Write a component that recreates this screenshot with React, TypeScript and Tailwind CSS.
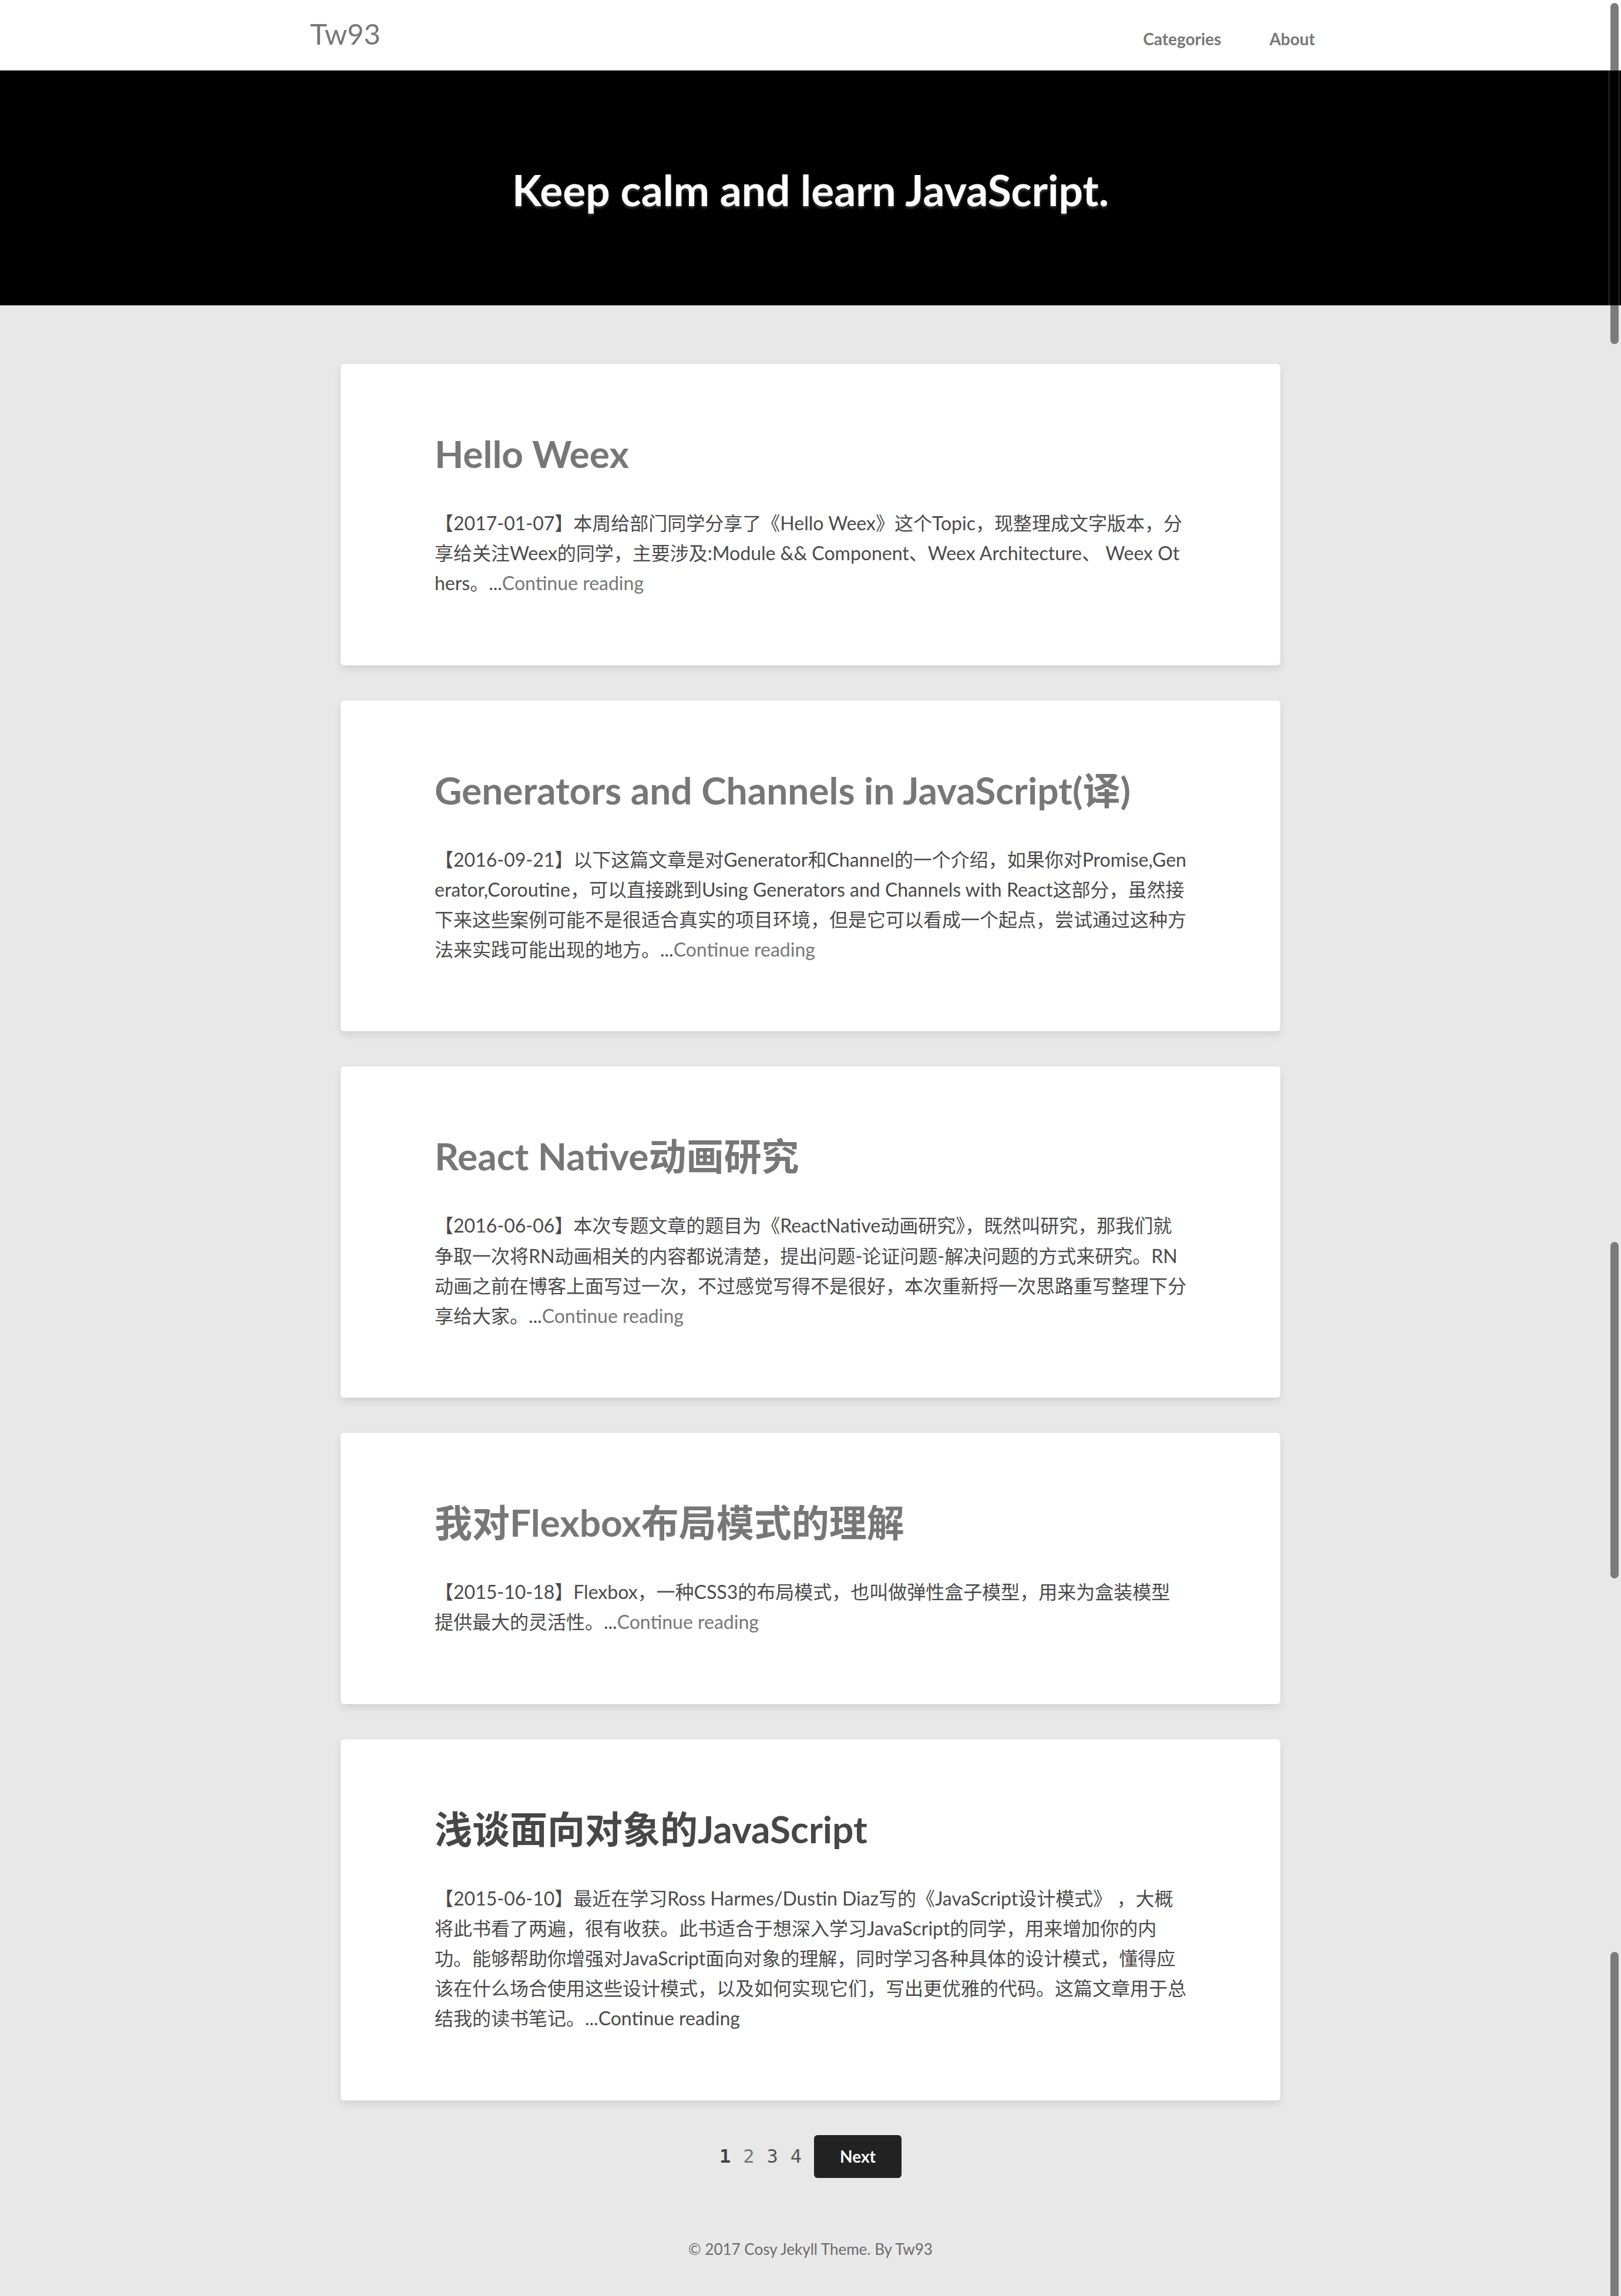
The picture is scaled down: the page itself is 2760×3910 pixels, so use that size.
const posts = [
  {
    title: "Hello Weex",
    date: "2017-01-07",
    excerpt:
      "本周给部门同学分享了《Hello Weex》这个Topic，现整理成文字版本，分享给关注Weex的同学，主要涉及:Module && Component、Weex Architecture、 Weex Others。",
  },
  {
    title: "Generators and Channels in JavaScript(译)",
    date: "2016-09-21",
    excerpt:
      "以下这篇文章是对Generator和Channel的一个介绍，如果你对Promise,Generator,Coroutine，可以直接跳到Using Generators and Channels with React这部分，虽然接下来这些案例可能不是很适合真实的项目环境，但是它可以看成一个起点，尝试通过这种方法来实践可能出现的地方。",
  },
  {
    title: "React Native动画研究",
    date: "2016-06-06",
    excerpt:
      "本次专题文章的题目为《ReactNative动画研究》，既然叫研究，那我们就争取一次将RN动画相关的内容都说清楚，提出问题-论证问题-解决问题的方式来研究。RN动画之前在博客上面写过一次，不过感觉写得不是很好，本次重新捋一次思路重写整理下分享给大家。",
  },
  {
    title: "我对Flexbox布局模式的理解",
    date: "2015-10-18",
    excerpt: "Flexbox，一种CSS3的布局模式，也叫做弹性盒子模型，用来为盒装模型提供最大的灵活性。",
  },
  {
    title: "浅谈面向对象的JavaScript",
    date: "2015-06-10",
    active: true,
    excerpt:
      "最近在学习Ross Harmes/Dustin Diaz写的《JavaScript设计模式》 ，大概将此书看了两遍，很有收获。此书适合于想深入学习JavaScript的同学，用来增加你的内功。能够帮助你增强对JavaScript面向对象的理解，同时学习各种具体的设计模式，懂得应该在什么场合使用这些设计模式，以及如何实现它们，写出更优雅的代码。这篇文章用于总结我的读书笔记。",
  },
];

function PostCard({ post }: { post: (typeof posts)[number] }) {
  return (
    <article className="bg-white rounded-[6px] shadow-[0_6px_14px_rgba(0,0,0,0.1)] px-[160px] pt-[113px] pb-[114px]">
      <h2
        className={
          "text-[64px] leading-[80px] font-bold " +
          (post.active ? "text-[#474747]" : "text-[#777]")
        }
      >
        <a href="#">{post.title}</a>
      </h2>
      <p className="mt-[52px] text-[32px] leading-[51.2px] text-[#4a4a4a] break-all">
        【{post.date}】{post.excerpt}...
        <a href="#" className={post.active ? "text-[#4a4a4a]" : "text-[#777]"}>
          Continue reading
        </a>
      </p>
    </article>
  );
}

export default function App() {
  return (
    <div className="relative min-h-screen bg-[#e8e8e8] font-[Lato,'Noto_Sans_CJK_SC',sans-serif]">
      <header className="bg-white h-[120px]">
        <div className="mx-auto w-[1800px] flex justify-between pl-[48px] pr-[41px]">
          <a href="#" className="pt-[28px] text-[49px] leading-[58px] text-[#777]">
            Tw93
          </a>
          <nav className="flex gap-[82px] pt-[46px] text-[28px] leading-[40px] font-bold text-[#777]">
            <a href="#">Categories</a>
            <a href="#">About</a>
          </nav>
        </div>
      </header>

      <section className="bg-black h-[400px] pt-[160px] text-center">
        <h1 className="text-[73px] leading-[87px] font-bold text-white [text-shadow:0_3px_4px_rgba(255,255,255,0.25)]">
          Keep calm and learn JavaScript.
        </h1>
      </section>

      <main className="w-[1600px] mx-auto pt-[100px] flex flex-col gap-[60px]">
        {posts.map((p) => (
          <PostCard key={p.date} post={p} />
        ))}
      </main>

      <div className="mt-[59px] flex justify-center items-center gap-[21px] font-['DejaVu_Sans_Mono',monospace] text-[32px]">
        <span className="font-bold text-[#444]">1</span>
        <a href="#" className="text-[#777]">2</a>
        <a href="#" className="text-[#555]">3</a>
        <a href="#" className="text-[#555]">4</a>
        <a
          href="#"
          className="h-[73px] px-[44px] flex items-center rounded-[6px] bg-[#222] text-white font-[Lato,sans-serif] font-bold text-[28px]"
        >
          Next
        </a>
      </div>

      <footer className="mt-[103px] pb-[62px] text-center text-[26px] leading-[36px] text-[#6b6b6b]">
        © 2017 Cosy Jekyll Theme. By Tw93
      </footer>

      {/* overlay scrollbar thumbs from the stitched capture */}
      <div className="absolute right-[4px] top-[5px] h-[581px] w-[14px] rounded-full bg-[#7b7b7b]" />
      <div className="absolute right-[3px] top-[120px] h-[400px] w-[18px] border-x border-[#4a4a4a] bg-black" />
      <div className="absolute right-[4px] top-[2115px] h-[573px] w-[14px] rounded-full bg-[#7b7b7b]" />
      <div className="absolute right-[4px] top-[3324px] h-[586px] w-[14px] rounded-t-full bg-[#7b7b7b]" />
    </div>
  );
}
